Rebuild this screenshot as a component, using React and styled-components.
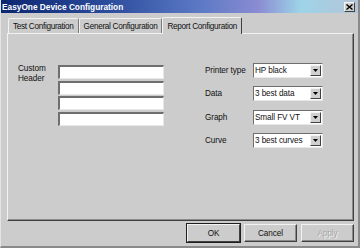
import React from 'react';
import styled, { createGlobalStyle } from "styled-components";

const GlobalStyle = createGlobalStyle`
    html, body {
        margin: 0;
        padding: 0;
        background: #cccccc;
    }
    * {
        box-sizing: border-box;
    }
`

const Window = styled.div`
    width: 360px;
    height: 248px;
    background: #cccccc;
    font-family: "Liberation Sans", Arial, sans-serif;
    font-size: 8.2px;
    letter-spacing: -0.1px;
    color: #111;
    display: flex;
    flex-direction: column;
    border-left: 1px solid #e4e4e4;
    border-right: 2px solid #8a8a8a;
    border-bottom: 2px solid #8a8a8a;
`

const TitleBar = styled.div`
    height: 13px;
    display: flex;
    align-items: center;
    justify-content: space-between;
    padding: 0 3px 0 1px;
    background: linear-gradient(90deg, #0b2670 0%, #2c4c9c 30%, #5a78c4 55%, #8a8cd2 72%, #9ed4e8 84%, #b4c4d8 100%);
    color: #fff;
    font-weight: bold;
    font-size: 8.3px;
    letter-spacing: 0;
`

const CloseBtn = styled.div`
    width: 11px;
    height: 10px;
    background: #d0d0d0;
    border-top: 1px solid #f4f4f4;
    border-left: 1px solid #f4f4f4;
    border-right: 1px solid #404040;
    border-bottom: 1px solid #404040;
    display: flex;
    align-items: center;
    justify-content: center;
`

const Body = styled.div`
    flex: 1;
    display: flex;
    flex-direction: column;
    padding: 4px 4px 0 6px;
`

const TabRow = styled.div`
    display: flex;
    align-items: flex-end;
    height: 16px;
    padding-left: 1px;
    position: relative;
    z-index: 1;
`

const Tab = styled.div`
    height: ${p => p.active ? 17 : 15}px;
    margin-bottom: ${p => p.active ? -1 : 0}px;
    padding: 0 4px;
    display: flex;
    align-items: center;
    background: #cccccc;
    letter-spacing: -0.3px;
    border-top: 1px solid #f2f2f2;
    border-left: 1px solid #f2f2f2;
    border-right: 1px solid ${p => p.active ? '#404040' : '#7a7a7a'};
    border-radius: 2px 2px 0 0;
    white-space: nowrap;
`

const Panel = styled.div`
    height: 188px;
    border-top: 1px solid #f2f2f2;
    border-left: 1px solid #f2f2f2;
    border-right: 1px solid #404040;
    border-bottom: 1px solid #404040;
    box-shadow: inset -1px -1px 0 #8a8a8a;
    display: flex;
    align-items: flex-start;
    padding: 31px 0 0 10px;
`

const HeaderGroup = styled.div`
    display: flex;
    align-items: flex-start;
`

const HeaderLabel = styled.div`
    width: 40px;
    line-height: 9.5px;
    margin-top: -1px;
`

const Fields = styled.div`
    display: flex;
    flex-direction: column;
    gap: 1.7px;
`

const TextBox = styled.div`
    width: 106px;
    height: 14px;
    background: #fff;
    border-top: 2px solid #6e6e6e;
    border-left: 2px solid #6e6e6e;
    border-right: 1px solid #e8e8e8;
    border-bottom: 1px solid #e8e8e8;
`

const OptionsGrid = styled.div`
    margin-left: 41px;
    margin-top: -2px;
    display: grid;
    grid-template-columns: 48px 70px;
    row-gap: 8.3px;
    align-items: center;
`

const Select = styled.div`
    height: 15px;
    background: #fff;
    border-top: 1px solid #6e6e6e;
    border-left: 1px solid #6e6e6e;
    border-right: 1px solid #e8e8e8;
    border-bottom: 1px solid #e8e8e8;
    display: flex;
    align-items: center;
    justify-content: space-between;
    padding: 1px;
    white-space: nowrap;
`

const Arrow = styled.div`
    width: 11px;
    height: 11px;
    background: #d0d0d0;
    border-top: 1px solid #f4f4f4;
    border-left: 1px solid #f4f4f4;
    border-right: 1px solid #404040;
    border-bottom: 1px solid #404040;
    display: flex;
    align-items: center;
    justify-content: center;
`

const ButtonRow = styled.div`
    display: flex;
    justify-content: flex-end;
    gap: 4px;
    margin-top: 3px;
`

const Button = styled.div`
    width: 53px;
    height: 18px;
    display: flex;
    align-items: center;
    justify-content: center;
    background: #cccccc;
    color: ${p => p.disabled ? '#a8a8a8' : '#111'};
    text-shadow: ${p => p.disabled ? '1px 1px 0 #f0f0f0' : 'none'};
    border-top: 1px solid #f2f2f2;
    border-left: 1px solid #f2f2f2;
    border-right: 1px solid #404040;
    border-bottom: 1px solid #404040;
    box-shadow: ${p => p.primary ? '0 0 0 1px #202020' : 'inset -1px -1px 0 #8a8a8a'};
`

const options = [
    ["Printer type", "HP black"],
    ["Data", "3 best data"],
    ["Graph", "Small FV VT"],
    ["Curve", "3 best curves"],
]

function App() {
    return (
        <Window>
            <GlobalStyle />
            <TitleBar>
                <span>EasyOne Device Configuration</span>
                <CloseBtn>
                    <svg width="7" height="6" viewBox="0 0 7 6">
                        <path d="M0.5 0.5 L6.5 5.5 M6.5 0.5 L0.5 5.5" stroke="#000" strokeWidth="1.4" />
                    </svg>
                </CloseBtn>
            </TitleBar>
            <Body>
                <TabRow>
                    <Tab>Test Configuration</Tab>
                    <Tab>General Configuration</Tab>
                    <Tab active>Report Configuration</Tab>
                </TabRow>
                <Panel>
                    <HeaderGroup>
                        <HeaderLabel>Custom<br />Header</HeaderLabel>
                        <Fields>
                            <TextBox />
                            <TextBox />
                            <TextBox />
                            <TextBox />
                        </Fields>
                    </HeaderGroup>
                    <OptionsGrid>
                        {options.map(([label, value]) => (
                            <React.Fragment key={label}>
                                <div>{label}</div>
                                <Select>
                                    <span>{value}</span>
                                    <Arrow>
                                        <svg width="5" height="3" viewBox="0 0 5 3">
                                            <path d="M0 0 H5 L2.5 3 Z" fill="#000" />
                                        </svg>
                                    </Arrow>
                                </Select>
                            </React.Fragment>
                        ))}
                    </OptionsGrid>
                </Panel>
                <ButtonRow>
                    <Button primary>OK</Button>
                    <Button>Cancel</Button>
                    <Button disabled>Apply</Button>
                </ButtonRow>
            </Body>
        </Window>
    )
}
export default App
